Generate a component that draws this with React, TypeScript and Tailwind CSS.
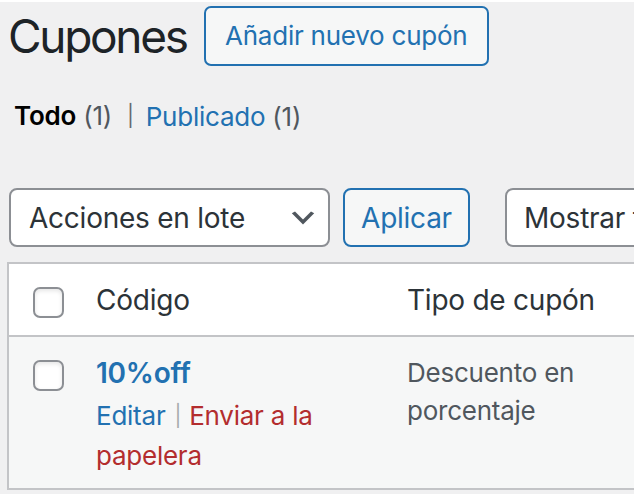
import React from "react";

function Checkbox({ className = "" }: { className?: string }) {
  return (
    <span
      className={`block w-[31px] h-[31px] rounded-[7px] border-2 border-[#8c8f94] bg-white shadow-[inset_0_2px_4px_rgba(0,0,0,0.1)] ${className}`}
    />
  );
}

function Chevron() {
  return (
    <svg viewBox="0 0 20 20" className="w-[32px] h-[32px] shrink-0" fill="#50575e">
      <path d="M5 6l5 5 5-5 2 1-7 7-7-7 2-1z" />
    </svg>
  );
}

export default function App() {
  return (
    <div className="w-[638px] h-[494px] overflow-hidden bg-white pt-[2px] pr-[4px] font-[Inter,sans-serif] tracking-[-0.015em]">
      <div className="h-full bg-[#f0f0f1] overflow-hidden">
        {/* heading */}
        <div className="flex items-center pt-[4px] pl-[8px] gap-[17px]">
          <h1 className="text-[46px] leading-[60px] text-[#1d2327] tracking-[-0.05em]">Cupones</h1>
          <button className="h-[60px] w-[285px] shrink-0 rounded-[7px] border-2 border-[#2271b1] bg-[#f6f7f7] text-[#2271b1] text-[26px] leading-none">
            Añadir nuevo cupón
          </button>
        </div>

        {/* status filters */}
        <ul className="flex items-center mt-[30px] ml-[14px] text-[26px] leading-[40px] whitespace-nowrap">
          <li>
            <span className="font-semibold text-[#000]">Todo</span>
            <span className="text-[#50575e]"> (1)</span>
            <span className="text-[#646970] text-[21px] ml-[15px] mr-[12px] relative top-[-2px]">|</span>
          </li>
          <li>
            <span className="text-[#2271b1]">Publicado</span>
            <span className="text-[#50575e]"> (1)</span>
          </li>
        </ul>

        {/* tablenav */}
        <div className="flex items-center mt-[50px] ml-[9px] whitespace-nowrap">
          <div className="flex items-center justify-between w-[321px] h-[59px] shrink-0 rounded-[8px] border-2 border-[#8c8f94] bg-white pl-[18px] pr-[9px]">
            <span className="text-[28px] text-[#2c3338]">Acciones en lote</span>
            <Chevron />
          </div>
          <button className="ml-[13px] w-[127px] h-[59px] shrink-0 rounded-[8px] border-2 border-[#2271b1] bg-[#f6f7f7] text-[28px] text-[#2271b1]">
            Aplicar
          </button>
          <div className="ml-[35px] flex items-center w-[300px] h-[59px] shrink-0 rounded-[8px] border-2 border-[#8c8f94] bg-white pl-[17px] overflow-hidden">
            <span className="text-[28px] text-[#2c3338]">Mostrar todos</span>
          </div>
        </div>

        {/* table */}
        <div className="mt-[15px] ml-[7px] w-[720px] border-l-2 border-t-2 border-b-2 border-[#c3c4c7] bg-white">
          <div className="flex items-center h-[71px]">
            <div className="w-[87px] pl-[24px] shrink-0">
              <Checkbox className="mt-[6px]" />
            </div>
            <div className="w-[311px] shrink-0 text-[28px] text-[#2c3338]">Código</div>
            <div className="text-[28px] text-[#2c3338] whitespace-nowrap">Tipo de cupón</div>
          </div>
          <div className="flex h-[153px] border-t-2 border-[#c3c4c7] bg-[#f6f7f7]">
            <div className="w-[87px] pl-[24px] pt-[23px] shrink-0">
              <Checkbox />
            </div>
            <div className="w-[311px] shrink-0 pt-[16px] pr-[24px]">
              <div className="text-[28px] leading-[40px] font-semibold text-[#2271b1]">10%off</div>
              <div className="mt-[4px] text-[26px] leading-[38px]">
                <span className="text-[#2271b1]">Editar</span>
                <span className="text-[#a7aaad] text-[21px] ml-[9px] mr-[8px] relative top-[-2px]">|</span>
                <span className="text-[#b32d2e]">Enviar a la papelera</span>
              </div>
            </div>
            <div className="w-[210px] shrink-0 pt-[17px] text-[26px] leading-[38px] text-[#50575e]">
              Descuento en porcentaje
            </div>
          </div>
        </div>
      </div>
    </div>
  );
}
